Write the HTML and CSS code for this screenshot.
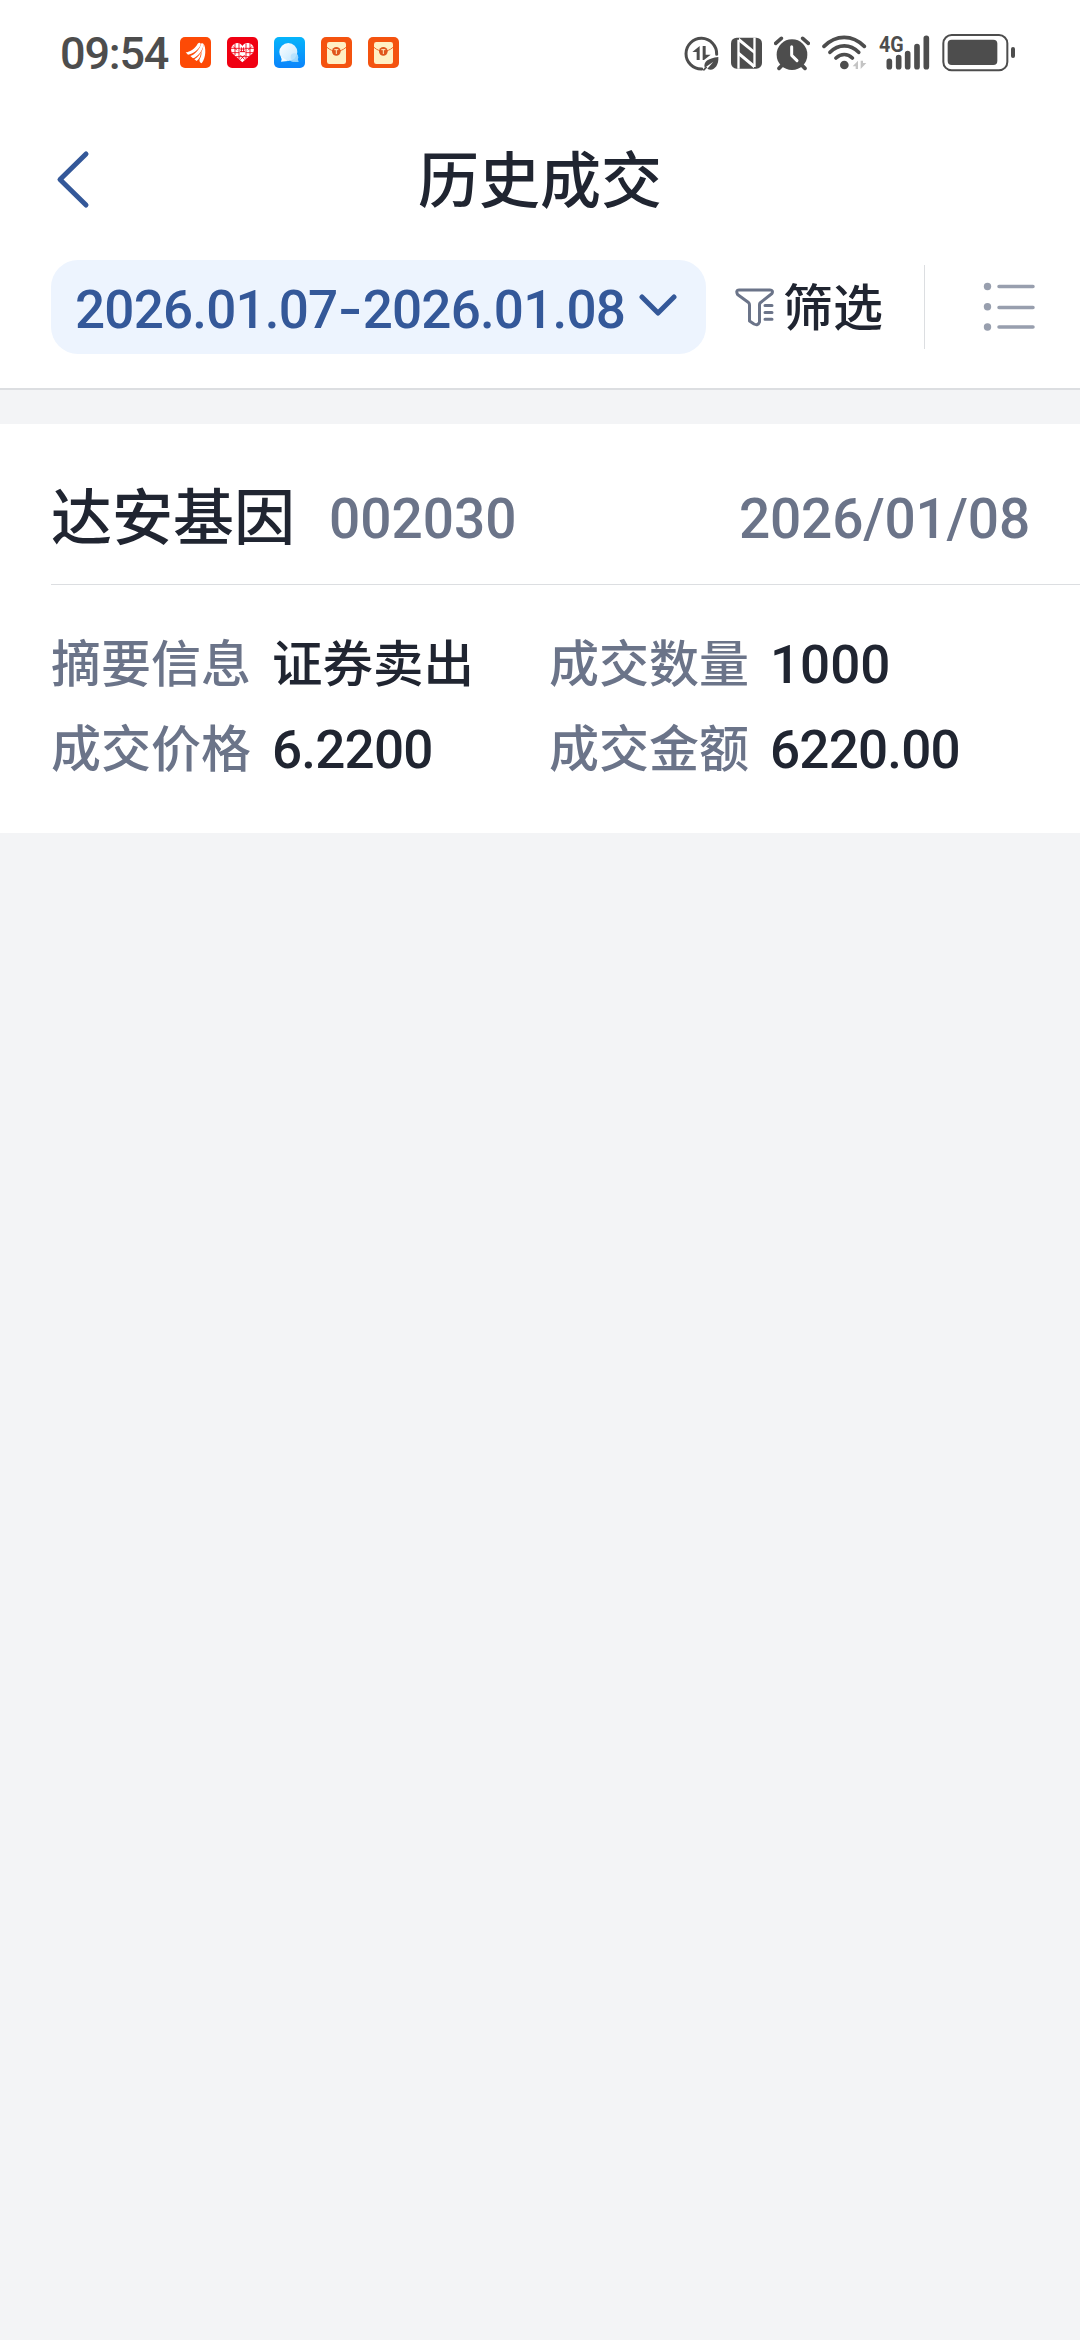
FILE: index.html
```html
<!DOCTYPE html>
<html lang="zh-CN">
<head>
    <meta charset="UTF-8">
    <meta name="viewport" content="width=device-width, initial-scale=1.0">
    <title>历史成交</title>
    <link rel="stylesheet" href="styles.css">
</head>
<body>
    <!-- Status bar -->
    <div class="status-bar">
        <span class="clock">09:54</span>
        <div class="apps">
            <svg class="app-icon" viewBox="0 0 93 93">
                <rect width="93" height="93" rx="15" fill="#fd4a06"/>
                <path d="M17 46C30 45 46 34 53 20C58 15 63 17 62 23C57 37 39 50 24 53Z" fill="#fff"/>
                <path d="M31 57C46 52 59 38 64 19C70 17 72 21 70 27C66 43 52 60 39 64Z" fill="#fff"/>
                <path d="M64 45C68 38 70 29 71 20C78 31 79 61 65 79C59 76 56 70 61 62C64 57 65 51 64 45Z" fill="#fff"/>
                <path d="M43 67C53 61 59 54 62 46C63 57 58 66 50 72Z" fill="#fff"/>
            </svg>
            <svg class="app-icon" viewBox="0 0 93 93">
                <rect width="93" height="93" rx="15" fill="#f00012"/>
                <path d="M46 76L15 48C8 35 16 20 30 18C37 18 43 22 46 27C50 20 57 17 64 18C78 20 85 35 78 48Z" fill="#fff"/>
                <path d="M24 20V54M36 19V67M57 20V67M69 19V57M12 34H39M54 34H81M14 47H37M56 47H79M27 59H66M18 28L30 40M75 28L63 40M40 54L53 68M53 54L40 68" stroke="#f00012" stroke-width="2.6" fill="none"/>
                <path d="M40 36H53M43 31V45M50 31V45M39 44H54" stroke="#f00012" stroke-width="3"/>
            </svg>
            <svg class="app-icon" viewBox="0 0 93 93">
                <defs>
                    <linearGradient id="chatBg" x1="0" y1="0" x2="0" y2="1">
                        <stop offset="0" stop-color="#05b5fb"/>
                        <stop offset="1" stop-color="#0b83fb"/>
                    </linearGradient>
                    <linearGradient id="chatBubble" x1="0" y1="0" x2="1" y2="1">
                        <stop offset="0" stop-color="#fff"/>
                        <stop offset="1" stop-color="#bfe6fe"/>
                    </linearGradient>
                </defs>
                <rect width="93" height="93" rx="15" fill="url(#chatBg)"/>
                <circle cx="59" cy="61" r="14" fill="#8bd0fd"/>
                <path d="M60 75H74L71 64Z" fill="#8bd0fd"/>
                <circle cx="43" cy="45" r="27" fill="url(#chatBubble)"/>
                <path d="M20 58L23 67L21 74L42 72Z" fill="#f2faff"/>
                <circle cx="61" cy="60" r="11" fill="#a9dcfe" opacity="0.6"/>
            </svg>
            <svg class="app-icon" viewBox="0 0 93 93">
                <rect width="93" height="93" rx="15" fill="#f4530f"/>
                <rect x="18" y="15" width="57" height="66" rx="7" fill="#fff0c4"/>
                <path d="M18 31C28 40 36 42 46 42C57 42 65 40 75 31" fill="none" stroke="#ee6a2c" stroke-width="3"/>
                <circle cx="46" cy="43" r="13" fill="#e0561d"/>
                <path d="M40 38H52M46 38V51" stroke="#fff0c4" stroke-width="3"/>
            </svg>
            <svg class="app-icon" viewBox="0 0 93 93">
                <rect width="93" height="93" rx="15" fill="#f4530f"/>
                <rect x="18" y="15" width="57" height="66" rx="7" fill="#fff0c4"/>
                <path d="M18 31C28 40 36 42 46 42C57 42 65 40 75 31" fill="none" stroke="#ee6a2c" stroke-width="3"/>
                <circle cx="46" cy="43" r="13" fill="#e0561d"/>
                <path d="M40 38H52M46 38V51" stroke="#fff0c4" stroke-width="3"/>
            </svg>
        </div>

        <div class="system">
            <!-- data saver -->
            <svg width="35" height="39" viewBox="50 36 105 117">
                <path d="M148 100A46 46 0 1 0 103 144" fill="none" stroke="#4d4d4d" stroke-width="9" stroke-linecap="round"/>
                <path d="M97 75V117H88V93H75Z M106 75V117H110L130 101H115V75Z" fill="#4d4d4d"/>
                <path d="M112 140C108 122 121 112 153 108C155 136 137 153 120 143L138 122Z" fill="#4d4d4d"/>
                <path d="M108 148L118 138" stroke="#4d4d4d" stroke-width="5"/>
            </svg>
            <!-- nfc -->
            <svg width="31" height="39" viewBox="189 36 93 117">
                <rect x="189" y="50" width="93" height="93" rx="17" fill="#4d4d4d"/>
                <path d="M208 56H215V143H208ZM256 50H263V138H256Z" fill="#fff"/>
                <path d="M213 50L258 88V98L213 62ZM213 92L258 130V142L213 104Z" fill="#fff"/>
            </svg>
            <!-- alarm -->
            <svg width="36" height="39" viewBox="318 36 108 117">
                <circle cx="372" cy="101" r="46" fill="#4d4d4d"/>
                <path d="M323 67L340 52M421 67L404 52M333 142L344 131M411 142L400 131" stroke="#4d4d4d" stroke-width="11" stroke-linecap="round"/>
                <path d="M371 77V103L387 119" fill="none" stroke="#fff" stroke-width="9" stroke-linecap="round" stroke-linejoin="round"/>
            </svg>
            <!-- wifi -->
            <svg width="45" height="39" viewBox="461 36 135 117">
                <path d="M467 76C503 40 552 40 588 76M485 94C510 68 546 68 571 94M503 111C518 97 538 97 552 111" fill="none" stroke="#4d4d4d" stroke-width="11" stroke-linecap="round"/>
                <circle cx="528" cy="132" r="13" fill="#4d4d4d"/>
                <path d="M569 119V144H562V136H553ZM577 119V144L594 126H584V119Z" fill="#c4c4c4"/>
            </svg>
            <!-- mobile signal -->
            <svg width="51" height="39" viewBox="629 36 153 117">
                <text class="net-type" x="629" y="93" textLength="74" lengthAdjust="spacingAndGlyphs">4G</text>
                <path d="M660 121V137M688 110V137M715 98V137M743 77V137M771 52V137" stroke="#4d4d4d" stroke-width="17" stroke-linecap="round"/>
            </svg>
            <!-- battery -->
            <svg width="74" height="39" viewBox="815 36 222 117">
                <rect x="819" y="42" width="192" height="106" rx="25" fill="none" stroke="#4d4d4d" stroke-width="6"/>
                <rect x="832" y="56" width="149" height="76" rx="12" fill="#4d4d4d"/>
                <rect x="1022" y="78" width="12" height="33" rx="6" fill="#4d4d4d"/>
            </svg>
        </div>
    </div>

    <!-- Page header -->
    <div class="header">
        <svg class="back" width="36" height="60" viewBox="0 0 36 60">
            <path d="M31 4L5 29.500L31 55" fill="none" stroke="#345899" stroke-width="5" stroke-linecap="round" stroke-linejoin="round"/>
        </svg>
        <h1>历史成交</h1>
    </div>

    <!-- Filters -->
    <div class="toolbar">
        <div class="date-range">
            <span class="range-text">2026.01.07<span class="dash">-</span>2026.01.08</span>
            <svg width="38" height="27" viewBox="0 0 38 27">
                <path d="M3 3L19 19L35 3" fill="none" stroke="#345899" stroke-width="5" stroke-linecap="round" stroke-linejoin="round"/>
            </svg>
        </div>
        <div class="filter">
            <svg width="40" height="40" viewBox="0 0 40 40" fill="none" stroke="#6b7489" stroke-width="3" stroke-linejoin="round" stroke-linecap="round">
                <path d="M4 3H35Q38.500 3 37 6.500L25 16Q24.500 17 24.500 18V35Q23 39 19 37L14.500 34V18Q14.500 16.500 13.500 15.500L2.500 7.500Q0.500 3 4 3Z"/>
                <path d="M30 18.500H37M30 25.500H37M30 32.200H37"/>
            </svg>
            <span>筛选</span>
        </div>
        <svg class="list-icon" width="52" height="50" viewBox="0 0 52 50">
            <g fill="#989fae">
                <circle cx="4.500" cy="4.500" r="3.700"/>
                <circle cx="4.500" cy="24.700" r="3.700"/>
                <circle cx="4.500" cy="45" r="3.700"/>
            </g>
            <path d="M16 4.500H50M16 25.500H50M16 45H50" stroke="#989fae" stroke-width="3.500" stroke-linecap="round"/>
        </svg>
    </div>

    <!-- Trade record -->
    <div class="record">
        <div class="record-head">
            <span class="name">达安基因</span>
            <span class="code">002030</span>
            <span class="date">2026/01/08</span>
        </div>
        <div class="record-body">
            <div class="field"><span class="label">摘要信息</span><span class="value">证券卖出</span></div>
            <div class="field"><span class="label">成交数量</span><span class="value num">1000</span></div>
            <div class="field"><span class="label">成交价格</span><span class="value num decimal">6.2200</span></div>
            <div class="field"><span class="label">成交金额</span><span class="value num decimal">6220.00</span></div>
        </div>
    </div>
</body>
</html>
```
FILE: styles.css
```css
* {
    box-sizing: border-box;
}

body {
    margin: 0;
    min-height: 2340px;
    background: #f3f4f6;
    color: #202531;
    font-family: Roboto, "Noto Sans CJK SC", sans-serif;
    font-weight: 500;
}

svg {
    display: block;
    flex: none;
}

/* status bar */
.status-bar {
    display: flex;
    align-items: center;
    height: 104px;
    padding: 0 64px 0 60px;
    background: #fff;
}

.clock {
    width: 120px;
    padding-top: 3px;
    color: #4d4d4d;
    font-size: 45px;
    letter-spacing: -1.2px;
    line-height: 52px;
    white-space: nowrap;
}

.apps {
    display: flex;
    gap: 16px;
}

.app-icon {
    width: 31px;
    height: 31px;
}

.system {
    display: flex;
    gap: 12px;
    margin-left: auto;
}

.net-type {
    fill: #4d4d4d;
    font-size: 66px;
    font-weight: 700;
}

/* header */
.header {
    display: grid;
    grid-template-columns: 110px 1fr 110px;
    align-items: center;
    height: 152px;
    background: #fff;
}

.back {
    margin-left: 55px;
}

h1 {
    margin: 0;
    padding-top: 4px;
    font-size: 61px;
    font-weight: 500;
    line-height: 80px;
    text-align: center;
}

/* toolbar */
.toolbar {
    display: flex;
    align-items: center;
    height: 134px;
    padding: 4px 45px 34px 51px;
    background: #fff;
    border-bottom: 2px solid #dcdee1;
}

.date-range {
    display: flex;
    align-items: center;
    justify-content: space-between;
    width: 655px;
    height: 94px;
    padding: 0 29px 0 24px;
    border-radius: 27px;
    background: #edf4fe;
    color: #345899;
}

.range-text {
    padding-top: 5px;
    font-size: 53px;
    letter-spacing: -0.8px;
    line-height: 64px;
    white-space: nowrap;
}

.dash {
    display: inline-block;
    margin: 0 4px;
    transform: scaleX(1.3);
}

.filter {
    display: flex;
    align-items: center;
    gap: 8px;
    height: 84px;
    width: 219px;
    padding-left: 29px;
    border-right: 1px solid #dcdee1;
    font-size: 50px;
    line-height: 60px;
}

.filter span {
    padding-top: 4px;
}

.list-icon {
    margin-left: auto;
}

/* record card */
.record {
    height: 409px;
    margin-top: 34px;
    padding-left: 51px;
    background: #fff;
}

.record-head {
    display: flex;
    align-items: center;
    height: 161px;
    padding: 29px 50px 0 0;
    border-bottom: 1px solid #dcdee1;
}

.name {
    font-size: 61px;
    line-height: 80px;
}

.code,
.date {
    color: #6b7489;
    font-size: 55px;
    line-height: 66px;
}

.code {
    margin-left: 34px;
}

.date {
    margin-left: auto;
    letter-spacing: -0.2px;
}

.record-body {
    display: grid;
    grid-template-columns: 498px 1fr;
    grid-auto-rows: 85px;
    padding-top: 37px;
}

.field {
    display: flex;
    align-items: center;
    font-size: 50px;
    line-height: 60px;
}

.label {
    width: 221px;
    color: #6b7489;
}

.value {
    font-size: 50.5px;
}

.num {
    font-size: 53px;
}

.decimal {
    letter-spacing: -0.8px;
}
```
